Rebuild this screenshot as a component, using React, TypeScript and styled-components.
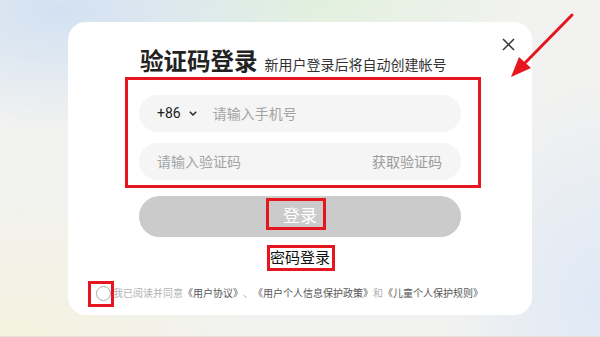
import { createGlobalStyle, styled } from 'styled-components';

const GlobalStyle = createGlobalStyle`
  body {
    margin: 0;
    font-family: Roboto, "Noto Sans CJK SC", sans-serif;
  }
`;

const Page = styled.div`
  position: relative;
  width: 600px;
  height: 337px;
  display: flex;
  align-items: center;
  justify-content: center;
  overflow: hidden;
  box-sizing: border-box;
  border-bottom: 1px solid #e2e2dc;
  background:
    radial-gradient(ellipse 260px 120px at 60px 10px, rgba(208, 224, 242, 0.95), rgba(208, 224, 242, 0) 100%),
    radial-gradient(ellipse 220px 80px at 310px 0px, rgba(222, 240, 218, 0.9), rgba(222, 240, 218, 0) 100%),
    radial-gradient(ellipse 220px 150px at 20px 337px, rgba(244, 242, 222, 0.95), rgba(244, 242, 222, 0) 100%),
    radial-gradient(ellipse 160px 220px at 600px 300px, rgba(222, 232, 246, 0.95), rgba(222, 232, 246, 0) 100%),
    #f2f2f0;
`;

const Card = styled.div`
  position: relative;
  width: 464px;
  height: 293px;
  box-sizing: border-box;
  padding: 24px 0 13px;
  background: #ffffff;
  border-radius: 18px;
  display: flex;
  flex-direction: column;
`;

const CloseButton = styled.button`
  position: absolute;
  top: 11px;
  right: 12px;
  width: 24px;
  height: 24px;
  padding: 0;
  border: none;
  background: none;
  display: flex;
  align-items: center;
  justify-content: center;
`;

const Body = styled.div`
  padding: 0 71px;
  display: flex;
  flex-direction: column;
`;

const TitleRow = styled.div`
  display: flex;
  align-items: baseline;
  gap: 7px;
  padding-left: 1px;
`;

const Title = styled.h1`
  margin: 0;
  font-size: 23.5px;
  line-height: 32px;
  font-weight: 700;
  color: #222;
`;

const Subtitle = styled.span`
  font-size: 14px;
  color: #333;
`;

const FieldGroup = styled.div`
  position: relative;
  margin-top: 17px;
  display: flex;
  flex-direction: column;
  gap: 11px;
`;

const Field = styled.div`
  height: 37px;
  border-radius: 19px;
  background: #f5f5f5;
  display: flex;
  align-items: center;
  justify-content: space-between;
  padding: 0 19px 0 18px;
  font-size: 14px;
`;

const Prefix = styled.div`
  display: flex;
  align-items: center;
  gap: 8px;
  color: #222;
  margin-right: 16px;
`;

const Left = styled.div`
  display: flex;
  align-items: center;
`;

const Placeholder = styled.span`
  color: #a3a3a3;
`;

const Action = styled.span`
  color: #9a9a9a;
`;

const LoginButton = styled.button`
  margin-top: 16px;
  height: 41px;
  border: none;
  border-radius: 21px;
  background: #cbcbcb;
  color: #fff;
  font-family: inherit;
  font-size: 17px;
  display: flex;
  align-items: center;
  justify-content: center;
`;

const Label = styled.span`
  position: relative;
  line-height: 24px;
`;

const PasswordLink = styled.div`
  margin-top: 11px;
  align-self: center;
  position: relative;
  font-size: 15px;
  line-height: 20px;
  color: #111;
`;

const Agreement = styled.div`
  margin-top: 18px;
  padding-left: 28px;
  display: flex;
  align-items: center;
  font-size: 10px;
  line-height: 16px;
  color: #b2b2b2;
  white-space: nowrap;
`;

const Radio = styled.span`
  position: relative;
  width: 15px;
  height: 15px;
  box-sizing: border-box;
  border: 1.5px solid #a9a9a9;
  border-radius: 50%;
  margin-right: 2px;
  flex: none;
`;

const Doc = styled.span`
  color: #555;
`;

const Mark = styled.span<{ $t: number; $r: number; $b: number; $l: number }>`
  position: absolute;
  top: ${(p) => p.$t}px;
  right: ${(p) => p.$r}px;
  bottom: ${(p) => p.$b}px;
  left: ${(p) => p.$l}px;
  border: 3px solid #e6161f;
  pointer-events: none;
`;

const Arrow = styled.svg`
  position: absolute;
  left: 0;
  top: 0;
`;

export default function App() {
  return (
    <>
      <GlobalStyle />
      <Page>
        <Card>
          <CloseButton aria-label="关闭">
            <svg width="13" height="13" viewBox="0 0 13 13">
              <path d="M1 1L12 12M12 1L1 12" stroke="#333" strokeWidth="1.5" />
            </svg>
          </CloseButton>
          <Body>
            <TitleRow>
              <Title>验证码登录</Title>
              <Subtitle>新用户登录后将自动创建帐号</Subtitle>
            </TitleRow>
            <FieldGroup>
              <Field>
                <Left>
                  <Prefix>
                    +86
                    <svg width="8" height="5" viewBox="0 0 8 5">
                      <path d="M0.8 0.8L4 4L7.2 0.8" fill="none" stroke="#222" strokeWidth="1.4" />
                    </svg>
                  </Prefix>
                  <Placeholder>请输入手机号</Placeholder>
                </Left>
              </Field>
              <Field>
                <Placeholder>请输入验证码</Placeholder>
                <Action>获取验证码</Action>
              </Field>
              <Mark $t={-18} $r={-20} $b={-8} $l={-14} />
            </FieldGroup>
            <LoginButton>
              <Label>
                登录
                <Mark $t={-6} $r={-9} $b={-2} $l={-17} />
              </Label>
            </LoginButton>
            <PasswordLink>
              密码登录
              <Mark $t={-3} $r={-5} $b={-3} $l={-3} />
            </PasswordLink>
          </Body>
          <Agreement>
            <Radio>
              <Mark $t={-6} $r={-4} $b={-7} $l={-9} />
            </Radio>
            我已阅读并同意<Doc>《用户协议》</Doc>、<Doc>《用户个人信息保护政策》</Doc>和<Doc>《儿童个人保护规则》</Doc>
          </Agreement>
        </Card>
        <Arrow width="600" height="337" viewBox="0 0 600 337">
          <line x1="572" y1="15" x2="522" y2="66" stroke="#e6161f" strokeWidth="3" strokeLinecap="round" />
          <polygon points="511,77 519,57 531,68" fill="#e6161f" />
        </Arrow>
      </Page>
    </>
  );
}
